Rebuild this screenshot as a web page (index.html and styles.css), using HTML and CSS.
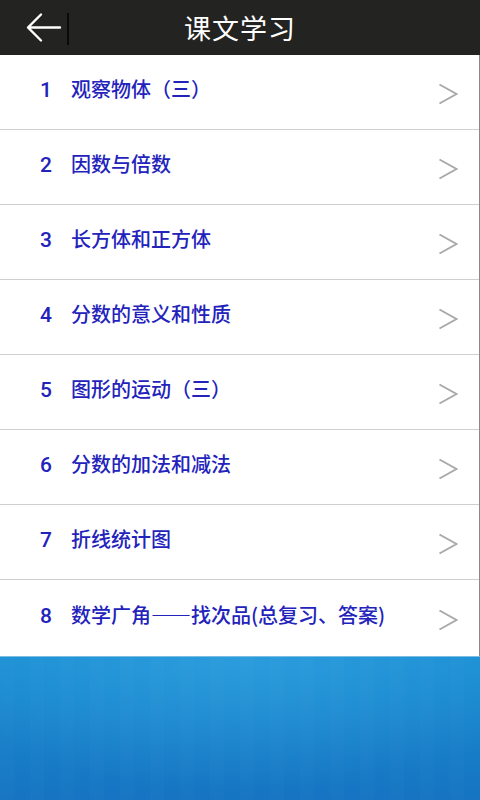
FILE: index.html
```html
<!DOCTYPE html>
<html lang="zh-CN">
<head>
<meta charset="utf-8">
<title>课文学习</title>
<link rel="stylesheet" href="styles.css">
</head>
<body>
<div class="screen">
  <header class="topbar">
    <div class="left">
      <svg class="back" width="36" height="32" viewBox="0 0 36 32">
        <path d="M2 15.5 H34 M15 2.5 L2 15.5 L15 28.5" fill="none" stroke="#ffffff" stroke-width="2.4" stroke-linecap="round" stroke-linejoin="round"/>
      </svg>
      <span class="divider"></span>
    </div>
    <h1 class="title">课文学习</h1>
    <div class="right"></div>
  </header>
  <ul class="list">
    <li class="row"><span class="label"><span class="num">1</span><span class="name">观察物体（三）</span></span><svg class="chev" width="20" height="22" viewBox="0 0 20 22"><path d="M1.5 1.5 L18.5 11 L1.5 20.5" fill="none" stroke="#a9a9a9" stroke-width="2"/></svg></li>
    <li class="row"><span class="label"><span class="num">2</span><span class="name">因数与倍数</span></span><svg class="chev" width="20" height="22" viewBox="0 0 20 22"><path d="M1.5 1.5 L18.5 11 L1.5 20.5" fill="none" stroke="#a9a9a9" stroke-width="2"/></svg></li>
    <li class="row"><span class="label"><span class="num">3</span><span class="name">长方体和正方体</span></span><svg class="chev" width="20" height="22" viewBox="0 0 20 22"><path d="M1.5 1.5 L18.5 11 L1.5 20.5" fill="none" stroke="#a9a9a9" stroke-width="2"/></svg></li>
    <li class="row"><span class="label"><span class="num">4</span><span class="name">分数的意义和性质</span></span><svg class="chev" width="20" height="22" viewBox="0 0 20 22"><path d="M1.5 1.5 L18.5 11 L1.5 20.5" fill="none" stroke="#a9a9a9" stroke-width="2"/></svg></li>
    <li class="row"><span class="label"><span class="num">5</span><span class="name">图形的运动（三）</span></span><svg class="chev" width="20" height="22" viewBox="0 0 20 22"><path d="M1.5 1.5 L18.5 11 L1.5 20.5" fill="none" stroke="#a9a9a9" stroke-width="2"/></svg></li>
    <li class="row"><span class="label"><span class="num">6</span><span class="name">分数的加法和减法</span></span><svg class="chev" width="20" height="22" viewBox="0 0 20 22"><path d="M1.5 1.5 L18.5 11 L1.5 20.5" fill="none" stroke="#a9a9a9" stroke-width="2"/></svg></li>
    <li class="row"><span class="label"><span class="num">7</span><span class="name">折线统计图</span></span><svg class="chev" width="20" height="22" viewBox="0 0 20 22"><path d="M1.5 1.5 L18.5 11 L1.5 20.5" fill="none" stroke="#a9a9a9" stroke-width="2"/></svg></li>
    <li class="row"><span class="label"><span class="num">8</span><span class="name">数学广角——找次品(总复习、答案)</span></span><svg class="chev" width="20" height="22" viewBox="0 0 20 22"><path d="M1.5 1.5 L18.5 11 L1.5 20.5" fill="none" stroke="#a9a9a9" stroke-width="2"/></svg></li>
  </ul>
  <div class="banner"></div>
</div>
</body>
</html>
```

FILE: styles.css
```css
* { box-sizing: border-box; }
html, body { margin: 0; padding: 0; }
body {
  width: 480px;
  height: 800px;
  overflow: hidden;
  font-family: "Noto Sans CJK SC", "Noto Sans", "Liberation Sans", sans-serif;
  background: #ffffff;
}
.screen {
  width: 480px;
  height: 800px;
  display: flex;
  flex-direction: column;
}
.topbar {
  height: 55px;
  flex: none;
  background: #232322;
  display: grid;
  grid-template-columns: 1fr auto 1fr;
  align-items: center;
}
.left {
  display: flex;
  align-items: center;
  padding-left: 26px;
}
.back { display: block; margin-top: 1px; }
.divider {
  width: 2px;
  height: 32px;
  background: #0a0a0a;
  margin-left: 5px;
  margin-top: 2px;
}
.title {
  margin: 0;
  color: #ffffff;
  font-size: 27px;
  font-weight: 400;
  letter-spacing: 1px;
  line-height: 1;
  padding-bottom: 1px;
}
.list {
  list-style: none;
  margin: 0;
  padding: 0;
  border-right: 1px solid #8a8a8a;
}
.row {
  height: 75px;
  display: flex;
  align-items: center;
  border-bottom: 1px solid #cfcfcf;
  color: #2323bc;
  font-size: 20px;
  font-weight: 500;
  padding-left: 40px;
  padding-right: 21px;
}
.row:last-child { border-bottom: none; height: 76px; }
.label {
  flex: 1;
  display: flex;
  align-items: baseline;
  margin-top: -7px;
  white-space: nowrap;
}
.num {
  width: 31px;
  flex: none;
  font-family: Roboto, "Liberation Sans", sans-serif;
  font-size: 21px;
}
.name { flex: 1; }
.chev { flex: none; margin-top: 3px; }
.banner {
  flex: 1;
  border-top: 1px solid #7dbde3;
  background:
    repeating-linear-gradient(90deg, rgba(255,255,255,0.012) 0 14px, rgba(255,255,255,0) 14px 30px),
    radial-gradient(ellipse 70% 90% at 50% 0%, rgba(60,170,230,0.5), rgba(60,170,230,0) 100%),
    linear-gradient(180deg, #1a8fd3 0%, #1880c9 55%, #1674c2 100%);
}
```
